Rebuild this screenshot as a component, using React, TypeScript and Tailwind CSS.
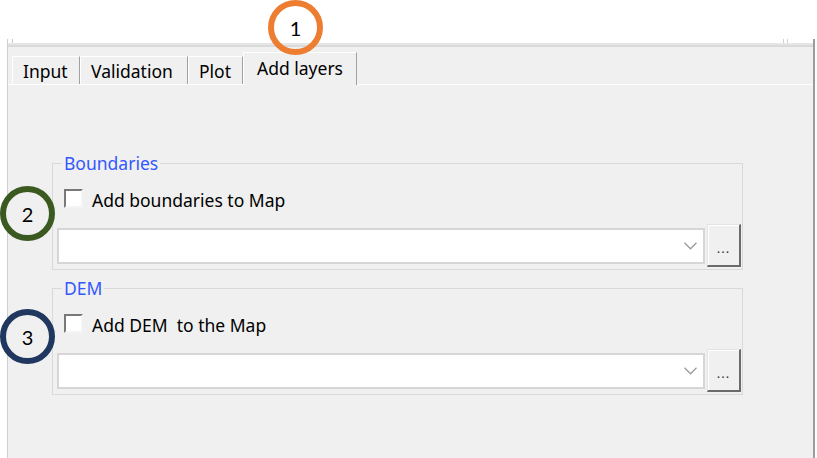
import React from "react";

type TabDef = { label: string; width: string; active?: boolean };

const TABS: TabDef[] = [
  { label: "Input", width: "w-[68px]" },
  { label: "Validation", width: "w-[108px]" },
  { label: "Plot", width: "w-[55px]" },
  { label: "Add layers", width: "w-[114px]", active: true },
];

export default function App() {
  return (
    <div className="relative h-[458px] w-[817px] overflow-hidden bg-white font-['Noto_Sans',sans-serif]">
      {/* window frame */}
      <div className="ml-[7px] mt-[39px] flex h-[419px] w-[808px] flex-col border-l border-[#cfcfcf] border-r-2 border-r-[#9c9c9c] bg-[#f0f0f0]">
        <div className="flex h-[4px] bg-white">
          <div className="ml-[4px] w-px bg-[#c8c8c8]" />
          <div className="ml-[770px] w-px bg-[#d0d0d0]" />
          <div className="ml-[3px] w-px bg-[#d0d0d0]" />
        </div>
        <div className="h-[2px] bg-[#e6e6e6]" />
        <div className="h-[2px] bg-[#dadada]" />

        {/* tab strip */}
        <div className="flex h-[37px] items-end pl-[4px]">
          {TABS.map((t) => (
            <Tab key={t.label} tab={t} />
          ))}
        </div>

        {/* tab page */}
        <div className="flex-1 border-t border-white">
          <LayerGroup title="Boundaries" label="Add boundaries to Map" first />
          <LayerGroup title="DEM" label="Add DEM  to the Map" />
        </div>
      </div>

      {/* annotation markers */}
      <Marker className="left-[268px] top-[0px] border-[#ed7d31]" n="1" />
      <Marker className="left-[0px] top-[186px] border-[#3b5a21] bg-[#f0f0f0]" n="2" />
      <Marker className="left-[0px] top-[309px] border-[#20375f] bg-[#f0f0f0]" n="3" />
    </div>
  );
}

function Tab({ tab }: { tab: TabDef }) {
  if (tab.active) {
    return (
      <div
        className={`relative z-10 -mb-px h-[33px] ${tab.width} border-l border-t border-white border-r border-r-[#a0a0a0] bg-[#f0f0f0] pl-[13px] pt-[3px] text-[17.5px] leading-[24px] text-black`}
      >
        {tab.label}
      </div>
    );
  }
  return (
    <div
      className={`h-[28px] ${tab.width} border-l border-t border-white border-r border-r-[#a0a0a0] pl-[10px] pt-[2px] text-[17.5px] leading-[24px] text-black`}
    >
      {tab.label}
    </div>
  );
}

function LayerGroup({
  title,
  label,
  first,
}: {
  title: string;
  label: string;
  first?: boolean;
}) {
  return (
    <fieldset
      className={`${first ? "mt-[68px]" : "mt-[8px]"} ml-[44px] w-[691px] border border-[#d9d9d9] pb-[2px]`}
    >
      <legend className="ml-[9px] px-[2px] text-[17.5px] leading-[20px] text-[#3358ff]">
        {title}
      </legend>

      <div className="mt-[15px] flex items-start">
        <span className="ml-[11px] mt-[1px] h-[19px] w-[19px] border-2 border-b-[#f4f4f4] border-l-[#787878] border-r-[#f4f4f4] border-t-[#787878] bg-white" />
        <span className="ml-[9px] whitespace-pre text-[17.5px] leading-[24px] text-black">
          {label}
        </span>
      </div>

      <div className="mt-[12px] flex items-center">
        <div className="ml-[4px] flex h-[36px] w-[648px] items-center justify-end border-2 border-[#d6d6d6] bg-white pr-[6px]">
          <svg width="13" height="8" viewBox="0 0 13 8" fill="none">
            <path d="M0.5 0.8 L6.5 6.8 L12.5 0.8" stroke="#9a9a9a" strokeWidth="1.3" />
          </svg>
        </div>
        <button className="ml-[2px] flex h-[43px] w-[34px] items-center justify-center border-l border-t border-[#e3e3e3] border-b-2 border-r-2 border-b-[#6b6b6b] border-r-[#6b6b6b] bg-[#f0f0f0] pt-[6px] text-[13px] leading-none tracking-[1px] text-[#333] shadow-[inset_1px_1px_0_#ffffff]">
          ...
        </button>
      </div>
    </fieldset>
  );
}

function Marker({ className, n }: { className: string; n: string }) {
  return (
    <div
      className={`absolute z-20 flex h-[55px] w-[55px] items-center justify-center rounded-full border-[6px] font-['Lato',sans-serif] text-[20px] text-black ${className}`}
    >
      {n}
    </div>
  );
}
